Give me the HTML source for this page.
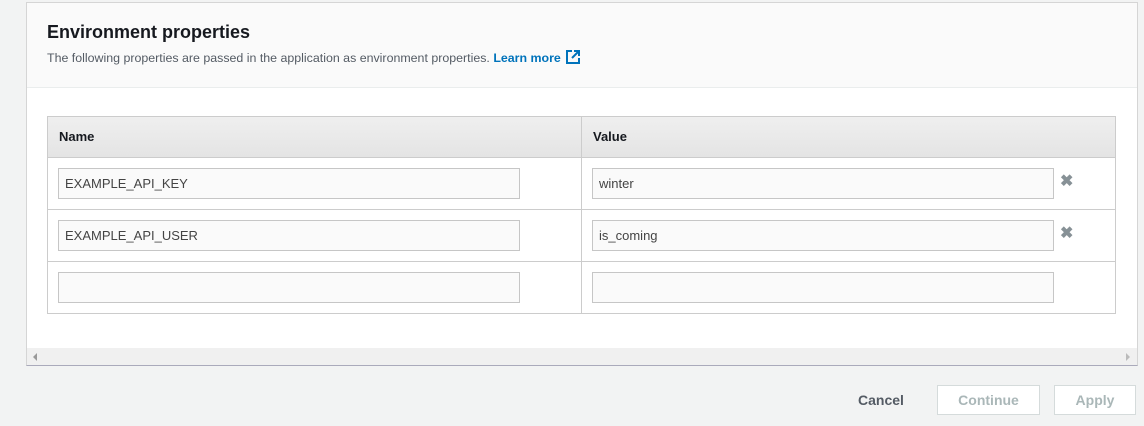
<!DOCTYPE html>
<html><head><style>
body{margin:0;width:1144px;height:426px;background:#f2f3f3;font-family:"Liberation Sans",sans-serif;position:relative;overflow:hidden}
.panel{position:absolute;left:26px;top:2px;width:1110px;height:362px;background:#fff;border:1px solid #d5d5d5;border-bottom:1px solid #aab}
.hdr{position:absolute;left:0;top:0;width:1110px;height:84px;background:#fafafa;border-bottom:1px solid #eaeded}
h1{position:absolute;left:20px;top:19px;margin:0;font-size:18px;font-weight:bold;color:#16191f}
.desc{position:absolute;left:20px;top:47px;font-size:12.4px;color:#545b64}
.desc b{color:#0073bb}
.tbl{position:absolute;left:20px;top:113px;width:1067px;height:196px;border:1px solid #ccc}
.th{position:absolute;top:0;height:40px;background:linear-gradient(#efefef,#e4e4e4);border-bottom:1px solid #ccc;font-size:13px;font-weight:bold;color:#16191f;line-height:40px}
.row{position:absolute;left:0;width:1067px;border-bottom:1px solid #ccc;height:51px}
.vl{position:absolute;left:533px;top:0;width:1px;height:196px;background:#ccc}
.in{position:absolute;border:1px solid #c6c6c6;background:#fafafa;font-size:13px;color:#444;line-height:29px;padding-left:6px;box-sizing:border-box;width:462px;height:31px}
.x{position:absolute;left:1012px;font-size:16px;color:#879196;font-weight:bold}
.sb{position:absolute;left:0;top:345px;width:1110px;height:17px;background:#f0f0f0}
.btn{position:absolute;top:385px;border:1px solid #d5dbdb;background:#fff;color:#aab7b8;font-weight:bold;font-size:14px;text-align:center;line-height:29px;box-sizing:border-box;height:30px}
</style></head><body>
<div class="panel">
 <div class="hdr">
  <h1>Environment properties</h1>
  <div class="desc">The following properties are passed in the application as environment properties. <b>Learn more</b> <svg width="14" height="14" viewBox="0 0 14 14" style="vertical-align:-2px;margin-left:2px"><path d="M6 1H1v12h12V8" fill="none" stroke="#0073bb" stroke-width="2"/><path d="M8 1h5v5M13 1L6 8" fill="none" stroke="#0073bb" stroke-width="2"/></svg></div>
 </div>
 <div class="tbl">
  <div class="th" style="left:0;width:1067px"><span style="position:absolute;left:11px">Name</span><span style="position:absolute;left:545px">Value</span></div>
  <div class="row" style="top:41px"><div class="in" style="left:10px;top:10px">EXAMPLE_API_KEY</div><div class="in" style="left:544px;top:10px">winter</div><div class="x" style="top:13px">✖</div></div>
  <div class="row" style="top:93px"><div class="in" style="left:10px;top:10px">EXAMPLE_API_USER</div><div class="in" style="left:544px;top:10px">is_coming</div><div class="x" style="top:13px">✖</div></div>
  <div class="row" style="top:145px;border-bottom:none"><div class="in" style="left:10px;top:10px"></div><div class="in" style="left:544px;top:10px"></div></div>
  <div class="vl"></div>
 </div>
 <div class="sb"><svg style="position:absolute;left:6px;top:5px" width="5" height="8"><path d="M4 0L0 4L4 8Z" fill="#999"/></svg><svg style="position:absolute;left:1099px;top:5px" width="5" height="8"><path d="M0 0L4 4L0 8Z" fill="#bbb"/></svg></div>
</div>
<div style="position:absolute;left:858px;top:392px;font-size:14px;font-weight:bold;color:#545b64">Cancel</div>
<div class="btn" style="left:937px;width:103px">Continue</div>
<div class="btn" style="left:1054px;width:82px">Apply</div>
</body></html>
